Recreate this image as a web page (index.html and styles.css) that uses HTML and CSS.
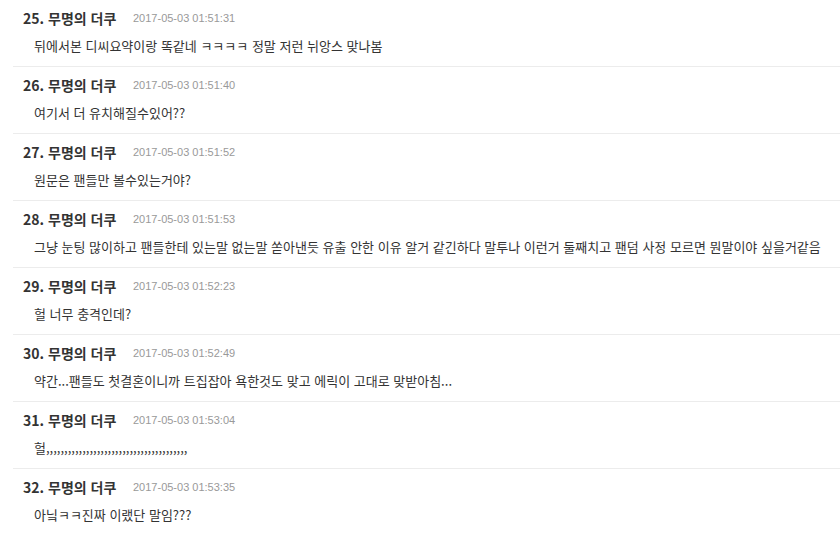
FILE: index.html
```html
<!DOCTYPE html>
<html lang="ko">

<head>
    <meta charset="UTF-8">
    <meta name="viewport" content="width=device-width, initial-scale=1.0">
    <title>댓글</title>
    <link rel="stylesheet" href="styles.css">
</head>

<body>
    <ul class="cmt-list">
        <li class="cmt">
            <p class="cmt-head"><span class="cmt-name">25. 무명의 더쿠</span><span class="cmt-date">2017-05-03 01:51:31</span></p>
            <p class="cmt-body">뒤에서본 디씨요약이랑 똑같네 ㅋㅋㅋㅋ 정말 저런 뉘앙스 맞나봄</p>
        </li>
        <li class="cmt">
            <p class="cmt-head"><span class="cmt-name">26. 무명의 더쿠</span><span class="cmt-date">2017-05-03 01:51:40</span></p>
            <p class="cmt-body">여기서 더 유치해질수있어??</p>
        </li>
        <li class="cmt">
            <p class="cmt-head"><span class="cmt-name">27. 무명의 더쿠</span><span class="cmt-date">2017-05-03 01:51:52</span></p>
            <p class="cmt-body">원문은 팬들만 볼수있는거야?</p>
        </li>
        <li class="cmt">
            <p class="cmt-head"><span class="cmt-name">28. 무명의 더쿠</span><span class="cmt-date">2017-05-03 01:51:53</span></p>
            <p class="cmt-body">그냥 눈팅 많이하고 팬들한테 있는말 없는말 쏟아낸듯 유출 안한 이유 알거 같긴하다 말투나 이런거 둘째치고 팬덤 사정 모르면 뭔말이야 싶을거같음</p>
        </li>
        <li class="cmt">
            <p class="cmt-head"><span class="cmt-name">29. 무명의 더쿠</span><span class="cmt-date">2017-05-03 01:52:23</span></p>
            <p class="cmt-body">헐 너무 충격인데?</p>
        </li>
        <li class="cmt">
            <p class="cmt-head"><span class="cmt-name">30. 무명의 더쿠</span><span class="cmt-date">2017-05-03 01:52:49</span></p>
            <p class="cmt-body">약간...팬들도 첫결혼이니까 트집잡아 욕한것도 맞고 에릭이 고대로 맞받아침...</p>
        </li>
        <li class="cmt">
            <p class="cmt-head"><span class="cmt-name">31. 무명의 더쿠</span><span class="cmt-date">2017-05-03 01:53:04</span></p>
            <p class="cmt-body">헐,,,,,,,,,,,,,,,,,,,,,,,,,,,,,,,,,,,,,,,</p>
        </li>
        <li class="cmt">
            <p class="cmt-head"><span class="cmt-name">32. 무명의 더쿠</span><span class="cmt-date">2017-05-03 01:53:35</span></p>
            <p class="cmt-body">아닠ㅋㅋ진짜 이랬단 말임???</p>
        </li>
    </ul>
</body>

</html>
```

FILE: styles.css
```css
* {
    margin: 0;
    padding: 0;
}

body {
    background: #fff;
    font-family: "Noto Sans CJK KR", "Liberation Sans", sans-serif;
    color: #333;
}

.cmt-list {
    list-style: none;
    margin-left: 13px;
}

.cmt {
    padding: 10px 0 12px 10px;
    border-bottom: 1px solid #ececec;
}

.cmt-head {
    display: flex;
    align-items: center;
    height: 16px;
    white-space: nowrap;
}

.cmt-name {
    width: 110px;
    font-size: 14px;
    font-weight: bold;
    color: #333;
}

.cmt-date {
    font-family: "Liberation Sans", sans-serif;
    font-size: 11px;
    color: #999;
}

.cmt-body {
    margin-top: 12px;
    padding-left: 11px;
    height: 16px;
    line-height: 16px;
    font-size: 13px;
    color: #333;
    white-space: nowrap;
}
```
